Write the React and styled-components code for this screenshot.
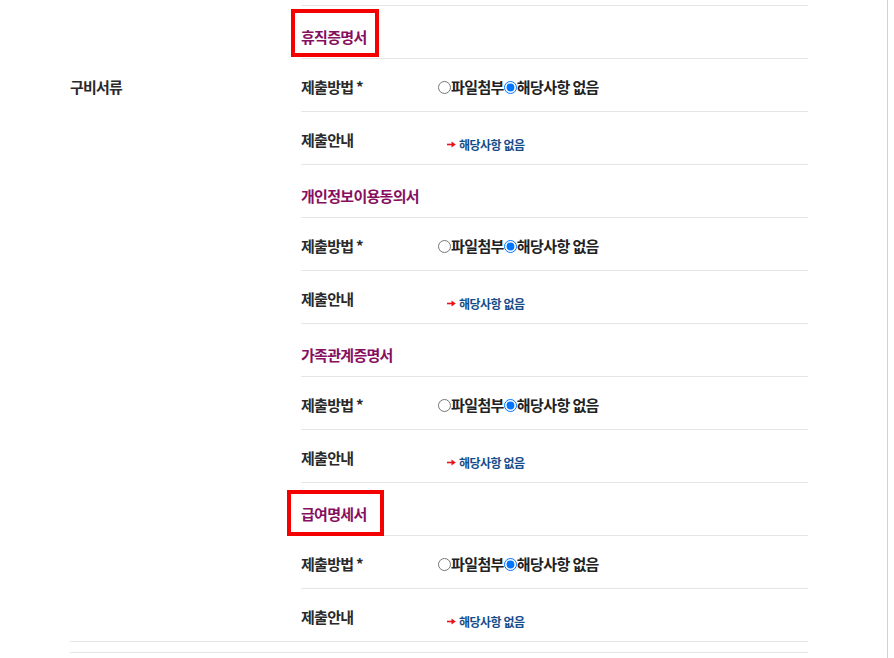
import React from "react";
import styled, { createGlobalStyle } from "styled-components";

const GlobalStyle = createGlobalStyle`
  html, body {
    margin: 0;
    padding: 0;
    background: #ffffff;
  }
  body {
    font-family: "Noto Sans CJK KR", "Noto Sans", sans-serif;
    color: #222222;
  }
`;

const documents = [
  { title: "휴직증명서", mark: { left: -10, top: 3, w: 88, h: 48 } },
  { title: "개인정보이용동의서" },
  { title: "가족관계증명서" },
  { title: "급여명세서", mark: { left: -14, top: 7, w: 97, h: 46 } },
];

const Arrow = () => (
  <svg width="9" height="7" viewBox="0 0 9 7">
    <path d="M0 3.5H5.5" stroke="#e8131b" strokeWidth="1.6" />
    <path d="M4.5 0.5L8.8 3.5L4.5 6.5Z" fill="#e8131b" />
  </svg>
);

const DocBlock = ({ doc, name, last }) => (
  <>
    <TitleRow>
      <DocTitle>{doc.title}</DocTitle>
      {doc.mark && (
        <Mark
          $left={doc.mark.left}
          $top={doc.mark.top}
          $w={doc.mark.w}
          $h={doc.mark.h}
        />
      )}
    </TitleRow>
    <Row>
      <Label>제출방법 *</Label>
      <Choices>
        <Choice>
          <Radio type="radio" name={name} />
          파일첨부
        </Choice>
        <Choice>
          <Radio type="radio" name={name} defaultChecked />
          해당사항 없음
        </Choice>
      </Choices>
    </Row>
    <Row $last={last}>
      <Label>제출안내</Label>
      <Note>
        <Arrow />
        해당사항 없음
      </Note>
    </Row>
  </>
);

const App = () => {
  return (
    <Page>
      <GlobalStyle />
      <Section>
        <SectionLabel>구비서류</SectionLabel>
        <DocList>
          {documents.map((doc, idx) => (
            <DocBlock
              key={idx}
              doc={doc}
              name={`doc-${idx}`}
              last={idx === documents.length - 1}
            />
          ))}
        </DocList>
      </Section>
      <NextSection />
    </Page>
  );
};

const Page = styled.div`
  width: 888px;
  min-height: 658px;
  box-sizing: border-box;
  padding: 5px 0 0 70px;
  border-right: 1px solid #d2d2d2;
`;

const Section = styled.div`
  width: 738px;
  display: flex;
  border-bottom: 1px solid #e6e6e6;
`;

const SectionLabel = styled.div`
  width: 231px;
  flex-shrink: 0;
  padding-top: 72px;
  font-size: 15px;
  line-height: 20px;
  font-weight: 700;
  letter-spacing: -0.8px;
  color: #2a2a2a;
`;

const DocList = styled.div`
  flex: 1;
  border-top: 1px solid #e6e6e6;
`;

const Row = styled.div`
  display: flex;
  align-items: flex-start;
  box-sizing: border-box;
  height: ${(p) => (p.$last ? "52px" : "53px")};
  padding-top: 18px;
  border-bottom: ${(p) => (p.$last ? "none" : "1px solid #e6e6e6")};
`;

const TitleRow = styled(Row)`
  position: relative;
  padding-top: 21px;
`;

const DocTitle = styled.div`
  font-size: 15px;
  line-height: 20px;
  font-weight: 700;
  letter-spacing: -0.7px;
  color: #870f5f;
`;

const Mark = styled.span`
  position: absolute;
  left: ${(p) => p.$left}px;
  top: ${(p) => p.$top}px;
  width: ${(p) => p.$w}px;
  height: ${(p) => p.$h}px;
  box-sizing: border-box;
  border: 4px solid #f50000;
`;

const Label = styled.div`
  width: 137px;
  flex-shrink: 0;
  font-size: 15px;
  line-height: 20px;
  font-weight: 700;
  letter-spacing: -0.7px;
  color: #2a2a2a;
`;

const Choices = styled.div`
  display: flex;
  align-items: center;
  height: 20px;
`;

const Choice = styled.label`
  display: flex;
  align-items: center;
  font-size: 15px;
  line-height: 20px;
  font-weight: 700;
  letter-spacing: -0.6px;
  color: #222222;
`;

const Radio = styled.input`
  width: 13px;
  height: 13px;
  margin: 1px 0 0 0;
`;

const Note = styled.div`
  display: flex;
  align-items: center;
  gap: 3px;
  margin-top: 7px;
  padding-left: 9px;
  font-size: 12px;
  line-height: 15px;
  font-weight: 700;
  letter-spacing: -0.5px;
  color: #154d8a;
`;

const NextSection = styled.div`
  width: 738px;
  height: 20px;
  margin-top: 10px;
  border-top: 1px solid #e6e6e6;
`;

export default App;
